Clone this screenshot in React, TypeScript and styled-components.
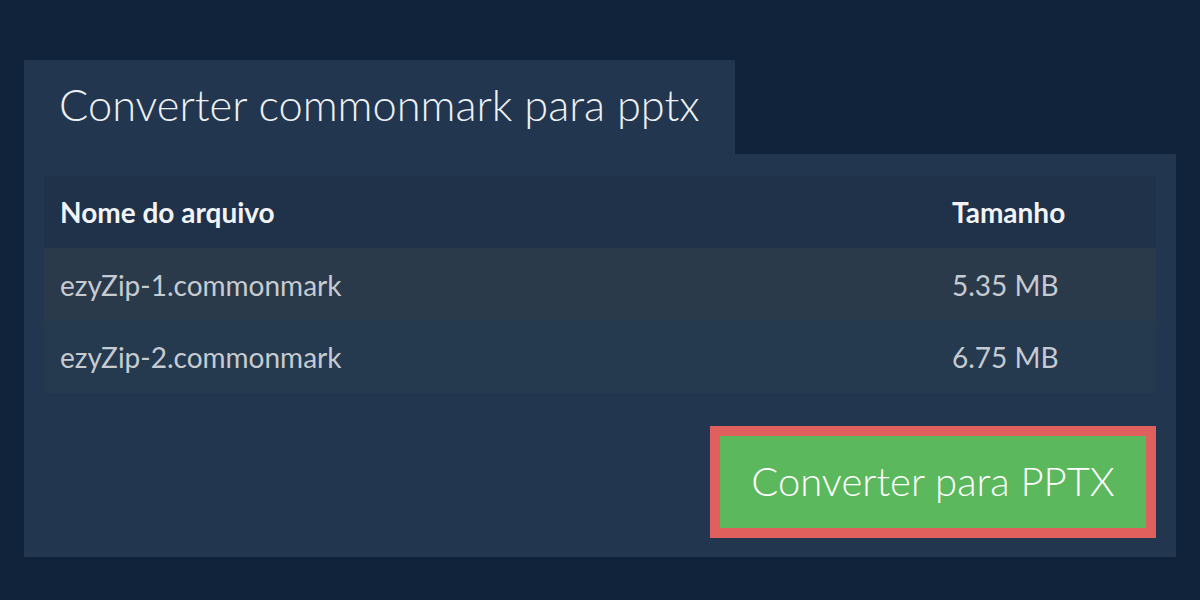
import styled, { createGlobalStyle } from "styled-components";

const Global = createGlobalStyle`
  html, body {
    margin: 0;
    padding: 0;
    background: #10233a;
  }
  body {
    font-family: Lato, "Liberation Sans", sans-serif;
  }
`;

const Page = styled.div`
  width: 1200px;
  height: 600px;
  box-sizing: border-box;
  padding: 60px 24px 0 24px;
  background: #10233a;
`;

const Tab = styled.div`
  display: inline-flex;
  align-items: center;
  height: 94px;
  box-sizing: border-box;
  padding: 0 35px 6px 35px;
  background: #22364f;
  color: #eef0f2;
  font-size: 43.4px;
  font-weight: 300;
  vertical-align: top;
`;

const Panel = styled.div`
  background: #22364f;
  padding: 22px 20px 19px 20px;
  display: flex;
  flex-direction: column;
`;

const Table = styled.div`
  display: grid;
  grid-template-columns: 1fr 220px;
`;

const Row = styled.div<{ $bg: string; $height: number }>`
  display: contents;
  & > div {
    background: ${p => p.$bg};
    height: ${p => p.$height}px;
  }
`;

const Cell = styled.div<{ $head?: boolean }>`
  display: flex;
  align-items: center;
  padding: 0 16px;
  font-size: 28px;
  font-weight: ${p => (p.$head ? 700 : 400)};
  color: ${p => (p.$head ? "#f2f3f5" : "#c6cbd2")};
`;

const Actions = styled.div`
  display: flex;
  justify-content: flex-end;
  margin-top: 33px;
`;

const Button = styled.button`
  width: 446px;
  height: 112px;
  box-sizing: border-box;
  border: 10px solid #df605c;
  background: #5cb85c;
  color: #ffffff;
  font-family: Lato, "Liberation Sans", sans-serif;
  font-size: 40px;
  font-weight: 300;
  padding: 0 0 2px 0;
  cursor: pointer;
`;

const files = [
  { name: "ezyZip-1.commonmark", size: "5.35 MB", bg: "#2b3a4b", h: 73 },
  { name: "ezyZip-2.commonmark", size: "6.75 MB", bg: "#25394f", h: 72 },
];

export default function App() {
  return (
    <Page>
      <Global />
      <Tab>Converter commonmark para pptx</Tab>
      <Panel>
        <Table>
          <Row $bg="#1f3249" $height={72}>
            <Cell $head>Nome do arquivo</Cell>
            <Cell $head>Tamanho</Cell>
          </Row>
          {files.map(f => (
            <Row key={f.name} $bg={f.bg} $height={f.h}>
              <Cell>{f.name}</Cell>
              <Cell>{f.size}</Cell>
            </Row>
          ))}
        </Table>
        <Actions>
          <Button>Converter para PPTX</Button>
        </Actions>
      </Panel>
    </Page>
  );
}
